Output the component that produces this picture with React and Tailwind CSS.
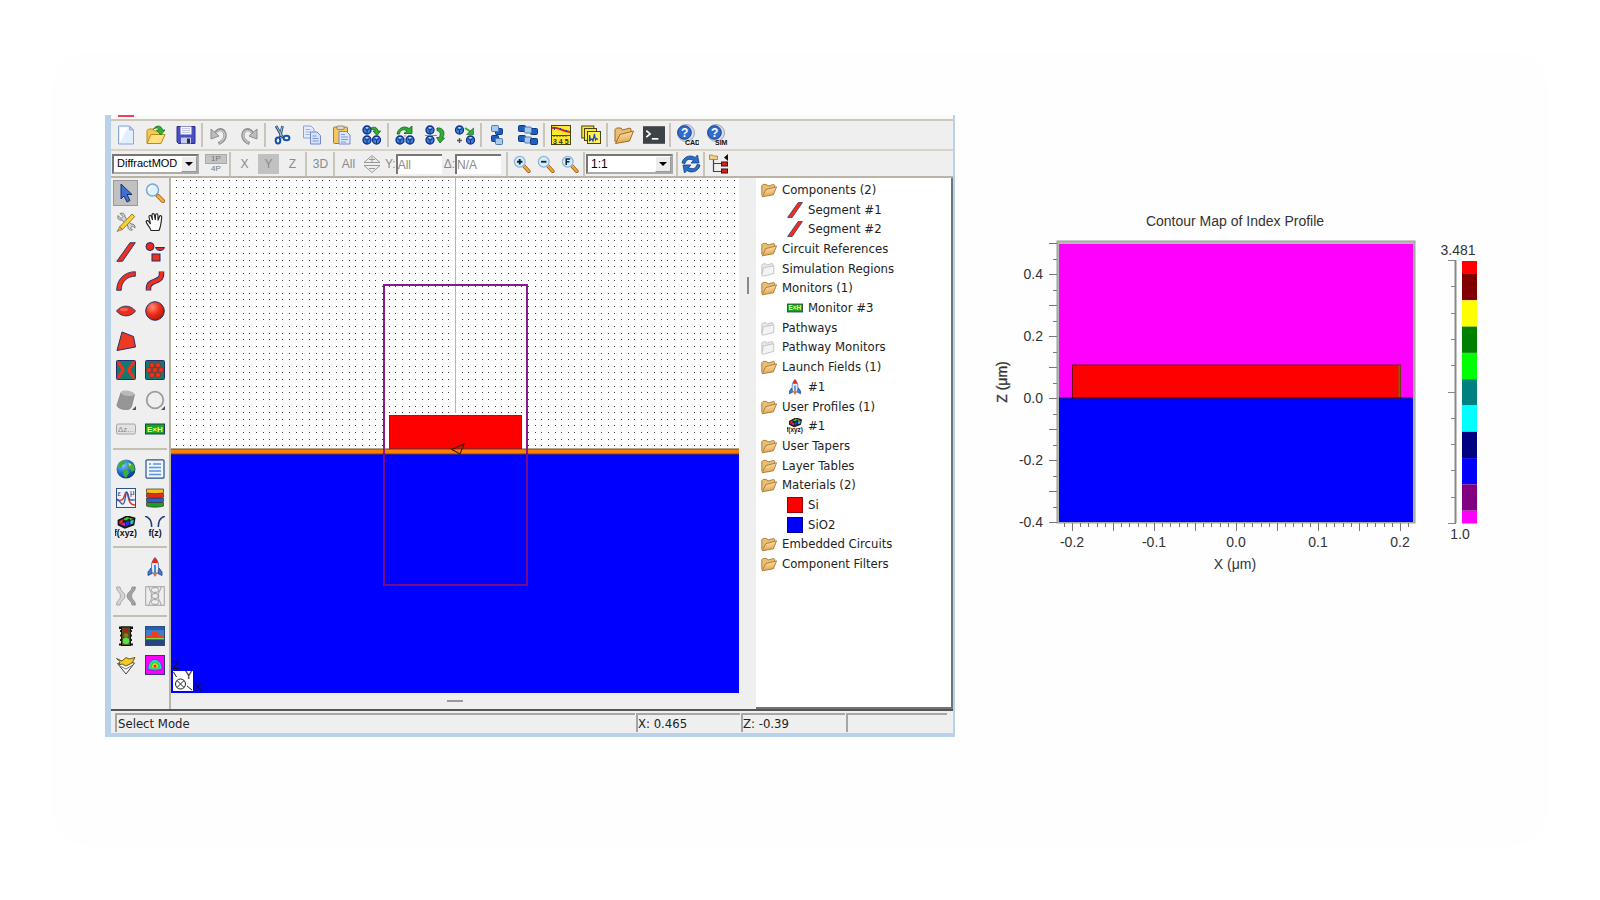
import clsx from "clsx";

const NAVY = "#1f2f6b";

function Svg({ size = 20, children }) {
  return (
    <svg width={size} height={size} viewBox="0 0 20 20" fill="none" className="shrink-0">
      {children}
    </svg>
  );
}

/* ---------- small shapes shared by several icons ---------- */

function Part({ x, y }) {
  return (
    <g>
      <circle cx={x} cy={y} r="4" fill="#3f7fd6" stroke="#0d2f86" strokeWidth="1.3" />
      <path
        d={`M${x - 2.4} ${y - 1.2}L${x} ${y}L${x + 2.4} ${y - 1.2}M${x} ${y}V${y + 3}`}
        stroke="#0d2f86"
        strokeWidth="1"
      />
      <path d={`M${x - 1.6} ${y - 2.2}L${x} ${y - 3}L${x + 1.6} ${y - 2.2}L${x} ${y - 1.2}Z`} fill="#cfe2fb" />
    </g>
  );
}

function Tile({ x, y, light }) {
  return (
    <rect
      x={x}
      y={y}
      width="7"
      height="6"
      rx="1"
      fill={light ? "#a9c9ef" : "#1d5fc0"}
      stroke={light ? "#4f79b4" : "#0c3a86"}
      strokeWidth="1"
    />
  );
}

function Lens({ sign }) {
  return (
    <Svg size={18}>
      <path d="M11.5 11.5L17.5 18" stroke="#8a4a10" strokeWidth="4" strokeLinecap="round" />
      <path d="M12 12L17.5 18" stroke="#f7a838" strokeWidth="2.6" strokeLinecap="round" />
      <circle cx="7.5" cy="7.5" r="6" fill="#d3ecfb" stroke="#8fb4d6" strokeWidth="1.4" />
      {sign === "+" && <path d="M4.5 7.5h6M7.5 4.5v6" stroke="#10203c" strokeWidth="2" />}
      {sign === "-" && <path d="M4.5 7.5h6" stroke="#10203c" strokeWidth="2" />}
      {sign === "F" && <path d="M5.8 11V4.5h4.4M5.8 7.6h3.6" stroke="#10203c" strokeWidth="1.7" />}
    </Svg>
  );
}

/* ---------- main toolbar ---------- */

const NewIcon = () => (
  <Svg>
    <path d="M2.5 1h11l4 4v14h-15z" fill="#e3eeff" stroke="#8ba6d8" />
    <path d="M4 2.500h8L4 17z" fill="#fff" />
    <path d="M13.5 1v4h4z" fill="#b6cbf0" stroke="#8ba6d8" strokeWidth=".8" />
  </Svg>
);

const OpenIcon = () => (
  <Svg>
    <path d="M1 18V5.5L2.5 4H7l1.5 2H15v4" fill="#f5c951" stroke="#b98b1c" />
    <path d="M1 18.5l4-9h14l-4 9z" fill="#ffe07a" stroke="#b98b1c" />
    <path d="M7.5 4C10 0 15.5 0 16.5 5H19l-4.2 5-4.3-5h2.7c-.6-2.5-3-2.600-5.7-1z" fill="#34b233" stroke="#187018" strokeWidth=".8" />
  </Svg>
);

const SaveIcon = () => (
  <Svg>
    <path d="M1 1.5h18v17H2.5L1 17z" fill="#4a4fc4" stroke="#2b2f8f" />
    <path d="M4.5 1.5h11v8h-11z" fill="#f4f5ff" />
    <path d="M6 3.5h8M6 5.5h8M6 7.5h8" stroke="#b8bbdf" strokeWidth=".8" />
    <path d="M5 12.5h10v6H5z" fill="#c9cce8" />
    <path d="M11 13.5h3v5h-3z" fill="#23286f" />
  </Svg>
);

const UndoIcon = ({ flip }) => (
  <Svg>
    <g transform={flip ? "translate(20 0) scale(-1 1)" : undefined}>
      <path d="M9.500 18.500c8-3.500 7.500-9.500 5-12.500-2.500-2.500-6-1.500-8.500 2.500" stroke="#8f8f8f" strokeWidth="3.200" />
      <path d="M10.5 18c6-3.500 6.300-9 3.700-11.500C12 4.700 9 5.500 6.500 8.500" stroke="#c8c8c8" strokeWidth="1.300" />
      <path d="M2 4v10l8-3z" fill="#bdbdbd" stroke="#8f8f8f" />
    </g>
  </Svg>
);

const CutIcon = () => (
  <Svg>
    <path d="M4 1l7 12M10.5 1L8 12" stroke="#29476f" strokeWidth="2.6" />
    <path d="M4.5 1.5l6 10.500M10.3 1.5L8 11" stroke="#a8c3e3" strokeWidth="1" />
    <ellipse cx="6" cy="15.5" rx="2.300" ry="2.900" stroke="#1350a8" strokeWidth="2" />
    <ellipse cx="14.5" cy="13" rx="2.900" ry="2.300" stroke="#1350a8" strokeWidth="2" />
  </Svg>
);

const CopyIcon = () => (
  <Svg>
    <path d="M1.5 1H9l3 3v9H1.5z" fill="#e3ecfd" stroke="#8f9fd6" />
    <path d="M3.5 4.5h5M3.5 7h6M3.5 9.5h6" stroke="#9fb3e4" />
    <path d="M8.5 7H15l3.5 3.5V19h-10z" fill="#d4e2fb" stroke="#7788cc" />
    <path d="M10.5 11h4M10.5 13.500h6M10.5 16h6" stroke="#7f98d8" />
  </Svg>
);

const PasteIcon = () => (
  <Svg>
    <rect x="1.5" y="2" width="14" height="16.5" rx="1" fill="#f6c65a" stroke="#b07c1a" />
    <rect x="5" y="1" width="7" height="3.5" rx="1" fill="#d9d9d9" stroke="#777" strokeWidth=".8" />
    <path d="M7 6.5h7.5L18 10v9H7z" fill="#dbe7fc" stroke="#7788cc" />
    <path d="M9 9.5h4M9 12h7M9 14.5h7M9 17h5" stroke="#7f98d8" />
  </Svg>
);

const DuplicateIcon = () => (
  <Svg>
    <Part x={5} y={5} />
    <Part x={5} y={15} />
    <Part x={14.5} y={15} />
    <path d="M9 3c4-2 6.500 0 7 3h2.500L15 10.500 11 6h2.300C13 4.500 11.500 4 9 4.800z" fill="#2fae3a" stroke="#14631b" strokeWidth=".8" />
  </Svg>
);

const RotateIcon = () => (
  <Svg>
    <Part x={5} y={15} />
    <Part x={15} y={15} />
    <path d="M10 7v12" stroke="#888" strokeDasharray="2 1" />
    <path d="M2 9C3 3 9 0 14 3.500L17 1v7.500H9L12 6C8.500 3.500 5 5 4.500 9z" fill="#2fae3a" stroke="#14631b" strokeWidth=".8" />
  </Svg>
);

const MirrorIcon = () => (
  <Svg>
    <Part x={5} y={5} />
    <Part x={5} y={15} />
    <path d="M0 10.5h12" stroke="#888" />
    <path d="M12 3c7-1 8.500 6 5.500 10h2l-4.500 5-3.500-5.500h2.500c2-3 1.500-6-2-7z" fill="#2fae3a" stroke="#14631b" strokeWidth=".8" />
  </Svg>
);

const MoveIcon = () => (
  <Svg>
    <Part x={4.5} y={5} />
    <Part x={15.5} y={15} />
    <path d="M2 15.5h5M4.5 13v5" stroke="#555" strokeWidth="1.4" />
    <path d="M10 3l6 4" stroke="#2fae3a" strokeWidth="2" />
    <path d="M18.5 3v6.500h-7z" fill="#2fae3a" stroke="#14631b" strokeWidth=".6" />
  </Svg>
);

const GroupIcon = () => (
  <Svg>
    <Tile x={7.5} y={3.5} />
    <Tile x={3.5} y={0.5} light />
    <Tile x={3.5} y={10.5} />
    <Tile x={7.5} y={13.5} light />
  </Svg>
);

const AlignIcon = () => (
  <Svg>
    <Tile x={0.5} y={0.5} />
    <Tile x={12.5} y={3.5} />
    <Tile x={6.5} y={2} light />
    <Tile x={0.5} y={10.5} />
    <Tile x={6.5} y={12} light />
    <Tile x={12.5} y={13.5} />
  </Svg>
);

const PlotIcon = () => (
  <Svg>
    <rect x=".5" y=".5" width="19" height="19" fill="#ffe92e" stroke="#4a4310" />
    <path d="M1 3c6-2 8 3 18 4" stroke="#e02020" strokeWidth="2" />
    <path d="M1 10.5h18M3 10v2M6 10v2M9 10v2M12 10v2M15 10v2" stroke="#4a4310" />
    <path d="M3 4h1M9 4h1M15 6h1" stroke="#2030c0" strokeWidth="2" />
    <text x="2" y="18.5" fontSize="7" fontWeight="700" fontFamily="Liberation Sans, sans-serif" fill="#3b3500">
      3 4 5
    </text>
  </Svg>
);

const PlotsIcon = () => (
  <Svg>
    <rect x=".8" y="1" width="12" height="12" fill="#ffe92e" stroke="#4a4310" />
    <rect x="3.5" y="3.5" width="12" height="12" fill="#ffe92e" stroke="#4a4310" />
    <rect x="6.5" y="6.5" width="13" height="12" fill="#fff25a" stroke="#4a4310" />
    <path d="M8.5 16.500V10l1 5 1.500-1 1 2 1.500-7 1 6 1-1.500 1.500 1" stroke="#1c46b8" strokeWidth="1.2" />
  </Svg>
);

function FolderIcon({ size = 20, muted }) {
  return (
    <Svg size={size}>
      <defs>
        <linearGradient id="manila" x1="0" y1="0" x2=".3" y2="1">
          <stop offset="0" stopColor="#fff0c8" />
          <stop offset="1" stopColor="#e3a54c" />
        </linearGradient>
      </defs>
      {muted ? (
        <g stroke="#b9b9b9">
          <path d="M1 17V5l1.500-1.500H6L8 5l6-2 1 2v2" fill="#e9e9e9" />
          <path d="M1 18.500l2-10L16 6v9.500L3 19z" fill="#f3f3f3" />
        </g>
      ) : (
        <g stroke="#a06a26">
          <path d="M1 17V4.500L2.500 3H7l1.500 2L16 3l1 1v4" fill="#e9bf74" />
          <path d="M1.500 18.500L6 9.500 19.500 6l-4 10z" fill="url(#manila)" />
        </g>
      )}
    </Svg>
  );
}

const ConsoleIcon = () => (
  <Svg size={22}>
    <rect x="0" y="2" width="20" height="16" fill="#3d4247" />
    <path d="M3 6l3.500 3L3 12" stroke="#fff" strokeWidth="1.5" />
    <path d="M8 13.500h6" stroke="#fff" strokeWidth="1.5" />
  </Svg>
);

const HelpIcon = ({ tag }) => (
  <svg width="24" height="22" viewBox="0 0 24 22" className="shrink-0">
    <circle cx="11" cy="9" r="8.500" fill="#d6dde8" stroke="#9aa7ba" />
    <circle cx="9.500" cy="8.500" r="6.800" fill="#2f6bd0" stroke="#1b3f91" />
    <text x="6" y="13" fontSize="12" fontWeight="700" fontFamily="Liberation Sans, sans-serif" fill="#fff">
      ?
    </text>
    <text x="10" y="21" fontSize="7" fontWeight="700" fontFamily="Liberation Sans, sans-serif" fill="#111">
      {tag}
    </text>
  </svg>
);

const RefreshIcon = () => (
  <Svg>
    <path d="M1 9C2 3 9 0 14 3.500L16.500 1l1.500 8h-8l2.500-2.500C9 4.500 5 5 4 9.500z" fill="#2b6fc4" stroke="#123f86" strokeWidth=".8" />
    <path d="M19 11c-1 6-8 9-13 5.500L3.500 19 2 11h8l-2.500 2.500C11 15.500 15 15 16 10.500z" fill="#2b6fc4" stroke="#123f86" strokeWidth=".8" />
  </Svg>
);

const TreeIcon = () => (
  <Svg>
    <path d="M4.5 5v12.500H12M4.500 9.500H12" stroke="#444" strokeWidth="1.2" />
    <path d="M.5 5.500V1h3l1 1h4v3.500z" fill="#f3d08c" stroke="#a8752c" strokeWidth=".8" />
    <path d="M19 0v7l-4-3.500z" fill="#111" />
    <rect x="12.5" y="8" width="6" height="4" fill="#d82020" stroke="#401010" />
    <rect x="12.5" y="15" width="6" height="4" fill="#d82020" stroke="#401010" />
  </Svg>
);

/* ---------- tool palette ---------- */

const ArrowIcon = () => (
  <Svg>
    <path d="M5 1l11 10.500h-5l3 6-3 1.500-3-6L5 16z" fill="#3f6fd0" stroke="#16317c" />
  </Svg>
);

const SearchIcon = () => (
  <Svg>
    <path d="M12.5 12.500L18 18" stroke="#9a5c16" strokeWidth="4" strokeLinecap="round" />
    <path d="M13 13l5 5" stroke="#f7b040" strokeWidth="2.5" strokeLinecap="round" />
    <circle cx="7.500" cy="7" r="6" fill="#dff1fc" stroke="#7fa6cf" strokeWidth="1.5" />
    <path d="M4 7c0-2.200 1.500-3.500 3.500-3.500" stroke="#fff" strokeWidth="1.5" />
  </Svg>
);

const EditIcon = () => (
  <Svg>
    <path d="M2 3.500l3 3 2-2-3-3c3-1 5 .5 5 3.500l6 7c3-.5 4.500 2 4 4l-2.500-2-2 2 2 2c-3 .5-5-1-4.500-4L6 8C3 8.500 1 6.500 2 3.500z" fill="#cfd3cf" stroke="#6e746e" strokeWidth=".9" />
    <path d="M3.500 15L16 2l2.800 2.600L6.500 17.500z" fill="#f8d338" stroke="#8f741a" strokeWidth=".9" />
    <path d="M3.500 15L1 19.500l5.500-2z" fill="#f0a090" stroke="#8f741a" strokeWidth=".7" />
  </Svg>
);

const HandIcon = () => (
  <Svg>
    <path
      d="M6 18.500c-.5-2.500-4-6-4.800-8.500-.3-1.500 1.800-2 2.600-.4L5.500 12 4 5c-.3-1.700 1.800-2.200 2.400-.5L7.500 8 7 3c0-1.800 2-1.800 2.400-.2L10.300 8l.3-5c.2-1.700 2.200-1.500 2.300.2L13 8.500l1.500-4c.6-1.500 2.400-.8 2.200.8-.4 3.500-.7 9-2.700 13.200z"
      fill="#fff"
      stroke="#222"
      strokeWidth="1.1"
    />
  </Svg>
);

const SegmentIcon = ({ size = 20 }) => (
  <Svg size={size}>
    <path d="M.8 19.300L14 .7h5.300L6.500 19.300z" fill="#f0301a" stroke={NAVY} strokeWidth=".9" />
  </Svg>
);

const ShapesIcon = () => (
  <Svg>
    <circle cx="5" cy="4.500" r="4" fill="#e62b1c" stroke={NAVY} />
    <path d="M10.500 5.500h9c-1 4-8 4-9 0z" fill="#e62b1c" stroke={NAVY} />
    <rect x="7" y="12" width="8" height="7" fill="#f0301a" stroke={NAVY} />
  </Svg>
);

const ArcIcon = () => (
  <Svg>
    <path d="M.7 19.300C.7 9 8 .7 19.300.7v4.500C11 5.200 5.200 11 5.200 19.300z" fill="#f0301a" stroke={NAVY} strokeWidth=".9" />
  </Svg>
);

const SBendIcon = () => (
  <Svg>
    <path d="M3.500 19.500V17c0-9 13-4.500 13-14V.5" stroke={NAVY} strokeWidth="5.500" />
    <path d="M3.500 19V17c0-9 13-4.500 13-14V1" stroke="#f0301a" strokeWidth="3.800" />
  </Svg>
);

const LensIcon = () => (
  <Svg>
    <path d="M.5 10c5-6.500 14-6.500 19 0-5 6.500-14 6.500-19 0z" fill="#e8301c" stroke={NAVY} strokeWidth=".9" />
    <ellipse cx="8" cy="8.500" rx="4" ry="1.800" fill="#f9604a" />
  </Svg>
);

const SphereIcon = () => (
  <Svg>
    <defs>
      <radialGradient id="ball" cx=".35" cy=".3" r=".8">
        <stop offset="0" stopColor="#ff8d78" />
        <stop offset=".5" stopColor="#ee2d18" />
        <stop offset="1" stopColor="#a81208" />
      </radialGradient>
    </defs>
    <circle cx="10" cy="10" r="9.300" fill="url(#ball)" stroke={NAVY} />
  </Svg>
);

const PolygonIcon = () => (
  <Svg>
    <path d="M6 1l11.500 4.500L19.500 16 1 19.500z" fill="#ee3a22" stroke={NAVY} />
  </Svg>
);

const CouplerIcon = () => (
  <Svg>
    <rect x=".5" y=".5" width="19" height="19" rx="1" fill="#0e7a74" stroke={NAVY} />
    <path d="M2.500 1.500c0 4.500 4.500 5 4.500 8.500s-4.500 4-4.500 8.500M17.500 1.500c0 4.500-4.500 5-4.500 8.500s4.500 4 4.500 8.500" stroke="#f0301a" strokeWidth="3.400" />
  </Svg>
);

const CrystalIcon = () => (
  <Svg>
    <rect x=".5" y=".5" width="19" height="19" rx="1" fill="#0e7a74" stroke={NAVY} />
    {[[7, 5], [13, 5], [4, 10], [10, 10], [16, 10], [7, 15], [13, 15]].map(([x, y]) => (
      <circle key={`${x}-${y}`} cx={x} cy={y} r="2.600" fill="#f0301a" stroke="#802018" strokeWidth=".5" />
    ))}
  </Svg>
);

const CylinderIcon = () => (
  <Svg>
    <path d="M5 2.500c3 1.500 9 3 13.500 2l-3 12c-1 3-4 3.500-7 3-4-.5-7.500-2-7.500-4.500z" fill="#969696" stroke="#7d7d7d" strokeWidth=".7" />
    <ellipse cx="11.700" cy="3.300" rx="6.900" ry="2.600" transform="rotate(8 11.700 3.300)" fill="#b9b9b9" />
    <path d="M20 16v4h-4z" fill="#555" />
  </Svg>
);

const RingIcon = () => (
  <Svg>
    <circle cx="10" cy="10" r="8.300" stroke="#9c9c9c" strokeWidth="1.800" />
    <path d="M20 16v4h-4z" fill="#555" />
  </Svg>
);

const DeltaIcon = () => (
  <Svg>
    <rect x=".5" y="5" width="19" height="10" rx="1.500" fill="#e2e2e2" stroke="#a4a4a4" />
    <text x="2" y="13" fontSize="8" fontFamily="Liberation Sans, sans-serif" fill="#8a8a8a">
      Δz...
    </text>
  </Svg>
);

const MonitorIcon = ({ size = 20 }) => (
  <Svg size={size}>
    <rect x=".5" y="5" width="19" height="10" fill="#19a51c" stroke="#1c3c60" />
    <text x="2" y="13" fontSize="8" fontWeight="700" fontFamily="Liberation Sans, sans-serif" fill="#f4ff7a">
      E×H
    </text>
  </Svg>
);

const GlobeIcon = () => (
  <Svg>
    <defs>
      <radialGradient id="sea" cx=".35" cy=".3" r=".8">
        <stop offset="0" stopColor="#7cc8f7" />
        <stop offset=".6" stopColor="#1763c4" />
        <stop offset="1" stopColor="#082a70" />
      </radialGradient>
    </defs>
    <circle cx="10" cy="10" r="9.500" fill="url(#sea)" />
    <path d="M3 4c3-3 5-3 7-2l-1 3-3 1v3L2 8zM8 10l4 1 1 3-3 5-3-3zM13 3l5 3 1 5-3 2-2-3-2-2z" fill="#3fae3b" />
    <path d="M12 4l3 1-1 3z" fill="#e8d85a" />
  </Svg>
);

const SheetIcon = () => (
  <Svg>
    <rect x="1" y=".8" width="18" height="18.400" rx="1" fill="#edf5ff" stroke="#2c4f95" strokeWidth="1.2" />
    <path d="M4 5h2M8 5h8M4 8.500h12M4 12h12M4 15.500h12" stroke="#5e92dc" strokeWidth="1.3" />
  </Svg>
);

const DispersionIcon = () => (
  <Svg>
    <rect x=".5" y=".5" width="19" height="19" fill="#eef3fc" stroke="#34508c" />
    <path d="M1 12.500c5 0 6 0 7.500-5S11 3 12 8s2 9 7 9" stroke="#e0391f" strokeWidth="1.5" />
    <path d="M1 11c3 1 4 6 6 5s2-6 3-10 2 0 3 4 3 1 6 2" stroke="#2a5ab8" strokeWidth="1.3" />
    <text x="1.500" y="7.500" fontSize="8" fontFamily="Liberation Sans, sans-serif" fill="#24376e">ε</text>
    <text x="14" y="7" fontSize="8" fontFamily="Liberation Sans, sans-serif" fill="#24376e">μ</text>
  </Svg>
);

const LayersIcon = () => (
  <Svg>
    {[["#19a02a", 14.5], ["#2b62d8", 10], ["#e3291c", 5.5], ["#f3c21b", 1]].map(([fill, y]) => (
      <path key={fill} d={`M1.500 ${y}h17v3.500c-2 1.500-15 1.500-17 0z`} fill={fill} stroke="#3a3020" strokeWidth=".7" />
    ))}
  </Svg>
);

const ProfileIcon = ({ size = 22 }) => (
  <Svg size={size}>
    <path d="M3 4l8-4 7 2-1 6-8 3-6-3z" fill="#222" stroke="#111" strokeWidth="1.2" />
    <path d="M4 4.500L7 3v3.500L4 7.500z" fill="#e22" />
    <path d="M7.500 3l3.500-2 2.500.8L10 4z" fill="#2d2" />
    <path d="M13 2l3.500.5-2.500 1z" fill="#dd2" />
    <path d="M10 5.500l3-1.200v3.500L10 9z" fill="#23e" />
    <path d="M14 4.300l3-1-.5 3.500-2.500 1z" fill="#2cd" />
    <path d="M5 7.500l4 1.700V6z" fill="#d2d" />
    <text x="-1" y="18" fontSize="8" fontWeight="700" fontFamily="Liberation Sans, sans-serif" fill="#111">
      f(xyz)
    </text>
  </Svg>
);

const TaperIcon = () => (
  <Svg size={22}>
    <path d="M1 0c5 2 6 5 6 10M19 0c-5 2-6 5-6 10" stroke="#273b78" strokeWidth="1.4" />
    <text x="4" y="18" fontSize="8" fontWeight="700" fontFamily="Liberation Sans, sans-serif" fill="#111">
      f(z)
    </text>
  </Svg>
);

const RocketIcon = ({ size = 20 }) => (
  <Svg size={size}>
    <path d="M6 11l-3 4v3.500l4-2zM14 11l3 4v3.500l-4-2z" fill="#3f7fd8" stroke="#1a3b86" strokeWidth=".8" />
    <path d="M10 .5c3 3 4 7 3.500 11L13 16H7l-.5-4.500C6 7.500 7 3.500 10 .5z" fill="#e3edf8" stroke="#445a86" strokeWidth=".8" />
    <path d="M10 .5c1.800 1.800 2.600 3.500 3 5.500H7c.4-2 1.200-3.700 3-5.500z" fill="#e02a1c" />
    <path d="M9 8h2v8H9z" fill="#4c8ae0" />
    <path d="M7.500 16h5L10 20z" fill="#f26a1c" />
  </Svg>
);

const ModesIcon = () => (
  <Svg>
    <path d="M.5 1H4c0 4.500 5 5 5 9s-5 4.500-5 9H.5c0-4.500 4-5 4-9s-4-4.500-4-9z" fill="#d4d4d4" stroke="#9a9a9a" strokeWidth=".8" />
    <path d="M19.500 1H16c0 4.500-5 5-5 9s5 4.500 5 9h3.500c0-4.500-4-5-4-9s4-4.500 4-9z" fill="#a2a2a2" stroke="#8a8a8a" strokeWidth=".8" />
  </Svg>
);

const CavityIcon = () => (
  <Svg>
    <rect x=".7" y=".7" width="18.600" height="18.600" fill="#eee" stroke="#a2a2a2" />
    <path d="M4 1c0 4 3 5 3 9s-3 5-3 9M16 1c0 4-3 5-3 9s3 5 3 9" stroke="#a2a2a2" />
    <ellipse cx="10" cy="4" rx="4" ry="2.500" stroke="#a2a2a2" />
    <ellipse cx="10" cy="10" rx="4" ry="2.500" stroke="#a2a2a2" />
    <ellipse cx="10" cy="16" rx="4" ry="2.500" stroke="#a2a2a2" />
  </Svg>
);

const LightIcon = () => (
  <Svg>
    <path d="M3 .5h14v2.500H3zM3 17.500h14v2H3z" fill="#111" />
    <path d="M4 5h12M4 9.500h12M4 14h12" stroke="#222" strokeWidth="2" />
    <rect x="5.500" y="1" width="9" height="18.500" fill="#53501c" stroke="#111" />
    <circle cx="10" cy="4.500" r="2.300" fill="#a42018" />
    <circle cx="10" cy="9.500" r="2.300" fill="#8a7a20" />
    <circle cx="10" cy="15" r="3.300" fill="#58e048" />
  </Svg>
);

const IndexIcon = () => (
  <Svg>
    <rect x=".5" y=".5" width="19" height="19" fill="#3f7ccb" stroke="#2b4a7d" />
    <path d="M1 1h18v3H1z" fill="#2360b0" />
    <path d="M1 10h5l1-4h6l1 4h5v2.500H1z" fill="#f03c20" />
    <path d="M1 12h18v1.500H1z" fill="#7ddc4a" />
    <path d="M1 13.500h18V19H1z" fill="#24457f" />
  </Svg>
);

const CubeIcon = () => (
  <Svg>
    <path d="M1.500 8.500l8.500-2 8.500 1.500L10 19z" fill="#fafafa" stroke="#444" />
    <path d="M4 11l6 3 6-3.500" stroke="#777" />
    <path d="M.5 3.500L6 6l4-3.500L13 4l6-1.500-3 5.500-6 3-4-2-3 1L4 6.500z" fill="#f4c92c" stroke="#5b4a12" strokeWidth=".9" />
  </Svg>
);

const ContourIcon = () => (
  <Svg>
    <rect x=".5" y=".5" width="19" height="19" fill="#ff00ff" stroke="#3b2f80" />
    <path d="M3 14c0-5 3-9.500 7-9.500s7 4.500 7 9.500c-3 1.500-11 1.500-14 0z" fill="#3fd0e0" stroke="#2038a0" strokeWidth=".6" />
    <path d="M5 13c0-4 2-6.500 5-6.500s5 2.500 5 6.500c-2 1-8 1-10 0z" fill="#34d834" />
    <path d="M7 12.500C7 10 8.500 8.300 10 8.300s3 1.700 3 4.200z" fill="#f6e020" />
    <circle cx="10" cy="11" r="1.500" fill="#e22" />
  </Svg>
);

/* ---------- bars ---------- */

const toolGroups = [
  [["New", <NewIcon />], ["Open", <OpenIcon />], ["Save", <SaveIcon />]],
  [["Undo", <UndoIcon />], ["Redo", <UndoIcon flip />]],
  [["Cut", <CutIcon />], ["Copy", <CopyIcon />], ["Paste", <PasteIcon />], ["Duplicate", <DuplicateIcon />]],
  [["Rotate", <RotateIcon />], ["Mirror", <MirrorIcon />], ["Move", <MoveIcon />]],
  [["Group", <GroupIcon />], ["Align", <AlignIcon />]],
  [["View plot", <PlotIcon />], ["View plots", <PlotsIcon />]],
  [["Browse", <FolderIcon />], ["Console", <ConsoleIcon />]],
  [["CAD help", <HelpIcon tag="CAD" />], ["Simulation help", <HelpIcon tag="SIM" />]],
];

const paletteGroups = [
  [
    ["Select", <ArrowIcon />], ["Zoom", <SearchIcon />],
    ["Edit", <EditIcon />], ["Pan", <HandIcon />],
    ["Segment", <SegmentIcon />], ["Shapes", <ShapesIcon />],
    ["Arc", <ArcIcon />], ["S-bend", <SBendIcon />],
    ["Lens", <LensIcon />], ["Sphere", <SphereIcon />],
    ["Polygon", <PolygonIcon />], null,
    ["Coupler", <CouplerIcon />], ["Crystal", <CrystalIcon />],
    ["Cylinder", <CylinderIcon />], ["Ring", <RingIcon />],
    ["Delta", <DeltaIcon />], ["Monitor", <MonitorIcon />],
  ],
  [
    ["Global settings", <GlobeIcon />], ["Symbols", <SheetIcon />],
    ["Materials", <DispersionIcon />], ["Layers", <LayersIcon />],
    ["Profiles", <ProfileIcon />], ["Tapers", <TaperIcon />],
  ],
  [
    null, ["Launch", <RocketIcon />],
    ["Modes", <ModesIcon />], ["Cavity", <CavityIcon />],
  ],
  [
    ["Simulate", <LightIcon />], ["Index profile", <IndexIcon />],
    ["Structure", <CubeIcon />], ["Contour map", <ContourIcon />],
  ],
];

const paletteHeights = ["h-[266px]", "h-[88px]", "h-[59px]", "h-[59px]"];

function Separator() {
  return <span className="h-6 w-[3px] shrink-0 border-l-2 border-[#c9c5b8]" />;
}

function Toolbar() {
  return (
    <div className="flex h-8 items-center border-t-2 border-b-2 border-[#cbc7ba] border-b-[#d6d3c9]">
      {toolGroups.map((group, i) => (
        <div key={group[0][0]} className="flex items-center">
          {i > 0 && <Separator />}
          {group.map(([label, icon]) => (
            <button key={label} type="button" aria-label={label} className="flex h-7 w-[30px] items-center justify-center">
              {icon}
            </button>
          ))}
        </div>
      ))}
    </div>
  );
}

function AxisButton({ children, active }) {
  return (
    <button
      type="button"
      className={clsx("flex h-5 w-[21px] items-center justify-center text-[#8a8a8a]", active && "bg-[#c1c1c1]")}
    >
      {children}
    </button>
  );
}

function Combo({ label, value, className }) {
  return (
    <div className={clsx("relative h-5 border-2 border-[#777] border-r-[#aaa] border-b-[#aaa] bg-white", className)}>
      <select aria-label={label} className="block h-full w-full appearance-none bg-transparent pl-[3px] text-black">
        <option>{value}</option>
      </select>
      <span className="pointer-events-none absolute top-0 right-0 flex h-4 w-4 items-center justify-center border border-[#999] border-t-white border-l-white bg-[#ececec]">
        <svg width="8" height="4" viewBox="0 0 8 4">
          <path d="M0 0h8L4 4z" fill="#000" />
        </svg>
      </span>
    </div>
  );
}

function Field({ label, value }) {
  return (
    <label className="flex items-center text-[#8a8a8a]">
      {label}
      <input
        defaultValue={value}
        className="h-5 w-[46px] border-t-2 border-l-2 border-[#777] bg-white text-[#8a8a8a] outline-none"
      />
    </label>
  );
}

function ViewBar() {
  return (
    <div className="flex h-[27px] items-center border-b-2 border-[#b9b4a4] font-['Liberation_Sans',Arial,sans-serif] text-xs">
      <Combo label="Simulator" value="DiffractMOD" className="ml-px w-[87px] text-[11px]" />
      <div className="mr-[2px] ml-[6px] flex w-[22px] flex-col text-center text-[8px] leading-[10px] text-[#777]">
        <button type="button" className="border border-[#aaa] bg-[#c4c4c4] leading-[8px]">1P</button>
        <button type="button">4P</button>
      </div>
      <Separator />
      <div className="flex gap-[3px] px-[2px]">
        <AxisButton>X</AxisButton>
        <AxisButton active>Y</AxisButton>
        <AxisButton>Z</AxisButton>
      </div>
      <Separator />
      <div className="px-[2px]">
        <AxisButton>3D</AxisButton>
      </div>
      <Separator />
      <div className="flex items-center gap-[2px] px-[2px]">
        <AxisButton>All</AxisButton>
        <button type="button" aria-label="Step" className="flex h-5 w-[22px] items-center justify-center">
          <svg width="18" height="20" viewBox="0 0 18 20" fill="none" stroke="#999">
            <path d="M1 8.500L9 1.500l8 7zM1 11.500l8 7 8-7z" />
            <path d="M6 5.500h6M9 3v5M6 14.500h6" />
          </svg>
        </button>
        <Field label="Y:" value="All" />
        <Field label="Δ:" value="N/A" />
      </div>
      <span className="w-[3px]" />
      <Separator />
      <div className="flex px-px">
        {["+", "-", "F"].map((sign) => (
          <button key={sign} type="button" aria-label={`Zoom ${sign}`} className="flex h-5 w-6 items-center justify-center">
            <Lens sign={sign} />
          </button>
        ))}
      </div>
      <Separator />
      <Combo label="Aspect ratio" value="1:1" className="w-[87px]" />
      <span className="w-[3px]" />
      <Separator />
      <button type="button" aria-label="Refresh" className="flex w-6 justify-center">
        <RefreshIcon />
      </button>
      <Separator />
      <button type="button" aria-label="Toggle tree" className="flex w-[26px] justify-center">
        <TreeIcon />
      </button>
    </div>
  );
}

function Palette() {
  return (
    <div className="flex w-[60px] shrink-0 flex-col border-r-2 border-[#b9b4a4]">
      {paletteGroups.map((group, g) => (
        <div key={g}>
          {g > 0 && <hr className="mx-[2px] my-1 border-t-2 border-[#c4c0b2]" />}
          <div className={clsx("grid auto-rows-fr grid-cols-2", paletteHeights[g])}>
            {group.map((tool, i) =>
              tool ? (
                <button
                  key={tool[0]}
                  type="button"
                  aria-label={tool[0]}
                  className={clsx(
                    "m-[2px] flex items-center justify-center",
                    tool[0] === "Select" && "border border-[#999] bg-[#c1c1c1]"
                  )}
                >
                  {tool[1]}
                </button>
              ) : (
                <span key={i} />
              )
            )}
          </div>
        </div>
      ))}
    </div>
  );
}

/* ---------- drawing area ---------- */

// grid points are spaced 6.635 apart around the vertical axis
const STEP = 6.635;
let gridPath = "";
for (let j = 0; j < 41; j++) {
  for (let i = -42; i < 43; i++) {
    const x = Math.round(284 + i * STEP);
    const y = Math.round(3 + j * STEP);
    gridPath += `M${x} ${y}h1v1h-1z`;
  }
}

function Drawing() {
  return (
    <svg viewBox="0 1 568 515" className="block h-auto w-full bg-white">
      <path d={gridPath} fill="#3a3a3a" />
      <path d="M284.5 0v238" stroke="#b4b4b4" />
      <rect x="216" y="236" width="138" height="36" fill="#fff" />
      <rect x="0" y="277" width="568" height="239" fill="#0000ff" />
      <rect x="0" y="272" width="568" height="5" fill="#ff8000" />
      <path d="M0 272h568" stroke="#6b4a20" />
      <path d="M0 277h568" stroke="#6b4a20" />
      <rect x="218.5" y="238.5" width="132" height="33" fill="#ff0000" stroke="#9c1a1a" />
      <path d="M213 276V108h143v168" fill="none" stroke="#8a1a8a" strokeWidth="2" />
      <path d="M213 276v132h143V276" fill="none" stroke="#7a0a88" strokeWidth="2" />
      <path d="M281 272.5L293 267l-4 10z" fill="none" stroke="#402000" strokeWidth="1.2" />
      <rect x="2" y="494" width="20" height="20" fill="#fff" />
      <g stroke="#222" fill="none">
        <circle cx="9.500" cy="507" r="5" />
        <path d="M6 503.500l7 7M13 503.500l-7 7M2.500 495l3 5M16 509l5 4" />
      </g>
      <g fontFamily="Liberation Sans, sans-serif" fontSize="11" fill="#111">
        <text x="2" y="492">Z</text>
        <text x="14" y="502">Y</text>
        <text x="24" y="514">X</text>
      </g>
    </svg>
  );
}

/* ---------- object tree ---------- */

const Swatch = ({ className }) => <span className={clsx("h-4 w-4 border border-black/40", className)} />;

const treeRows = [
  { text: "Components (2)" },
  { text: "Segment #1", icon: <SegmentIcon size={16} /> },
  { text: "Segment #2", icon: <SegmentIcon size={16} /> },
  { text: "Circuit References" },
  { text: "Simulation Regions", muted: true },
  { text: "Monitors (1)" },
  { text: "Monitor #3", icon: <MonitorIcon size={16} /> },
  { text: "Pathways", muted: true },
  { text: "Pathway Monitors", muted: true },
  { text: "Launch Fields (1)" },
  { text: "#1", icon: <RocketIcon size={16} /> },
  { text: "User Profiles (1)" },
  { text: "#1", icon: <ProfileIcon size={16} /> },
  { text: "User Tapers" },
  { text: "Layer Tables" },
  { text: "Materials (2)" },
  { text: "Si", icon: <Swatch className="bg-[#ff0000]" /> },
  { text: "SiO2", icon: <Swatch className="bg-[#0000ff]" /> },
  { text: "Embedded Circuits" },
  { text: "Component Filters" },
];

function ObjectTree() {
  return (
    <div className="w-[197px] shrink-0 border-r-2 border-b-2 border-[#6f7479] bg-white">
      <ul className="mt-[2px] grid h-[394px] auto-rows-fr">
        {treeRows.map((row, i) => (
          <li key={i} className={clsx("flex items-center gap-[5px] leading-4", row.icon ? "pl-[31px]" : "pl-[5px]")}>
            {row.icon || <FolderIcon size={16} muted={row.muted} />}
            <span>{row.text}</span>
          </li>
        ))}
      </ul>
    </div>
  );
}

function StatusBar() {
  const cell = "h-[19px] border-t-2 border-l-2 border-[#a6a6a6] leading-[17px]";
  return (
    <div className="flex items-center gap-px border-t-2 border-[#555] pt-[2px] pr-[6px] pb-px pl-[4px]">
      <div className={clsx(cell, "flex-1 pl-px")}>Select Mode</div>
      <div className={clsx(cell, "w-[104px]")}>X: 0.465</div>
      <div className={clsx(cell, "w-[104px]")}>Z: -0.39</div>
      <div className={clsx(cell, "w-[101px]")} />
    </div>
  );
}

function CadWindow() {
  return (
    <section className="border-r-2 border-b-4 border-l-[6px] border-[#b9d1ea] bg-[#efefef] font-['DejaVu_Sans_Condensed','DejaVu_Sans',Tahoma,sans-serif] text-[13px] text-[#222]">
      <div className="flex h-1 items-start bg-[#fafafa] pl-[7px]">
        <span className="h-[2px] w-4 bg-[#f0405a]" />
      </div>
      <Toolbar />
      <ViewBar />
      <div className="flex">
        <Palette />
        <div className="min-w-0 flex-1">
          <Drawing />
          <div className="flex h-4 items-center justify-center">
            <span className="h-[2px] w-4 bg-[#999]" />
          </div>
        </div>
        <div className="flex w-[17px] shrink-0 justify-center pt-[99px]">
          <span className="h-[17px] w-[2px] bg-[#888]" />
        </div>
        <ObjectTree />
      </div>
      <StatusBar />
    </section>
  );
}

/* ---------- contour map ---------- */

const px = (v) => 261 + v * 820;
const pz = (v) => 193 - v * 310;

const legendColors = [
  "#ff0000", "#800000", "#ffff00", "#008000", "#00ff00", "#008080",
  "#00ffff", "#000080", "#0000ff", "#800080", "#ff00ff",
];

function ContourMap() {
  const xTicks = Array.from({ length: 43 }, (_, i) => i - 21);
  const zTicks = Array.from({ length: 19 }, (_, i) => i - 8);

  return (
    <svg viewBox="0 0 520 372" className="mt-[90px] h-auto w-full" fontFamily="Liberation Sans, Arial, sans-serif" fontSize="14" fill="#333">
      <text x="260" y="21" textAnchor="middle">
        Contour Map of Index Profile
      </text>

      <rect x="82" y="36" width="358" height="282" fill="#b4b8b0" stroke="#999c96" />
      <rect x="84" y="39" width="354" height="154" fill="#ff00ff" />
      <rect x="84" y="193" width="354" height="124" fill="#0000ff" />
      <rect x="97.5" y="160" width="328" height="33" fill="#ff0000" stroke="#701010" />
      <path d="M424.5 160v33" stroke="#6b6a10" strokeWidth="2" />
      <path d="M84 193h354" stroke="#200060" />

      <g stroke="#777">
        {zTicks.map((t) => (
          <path key={t} d={`M${t % 2 ? 78 : 74} ${Math.round(pz(t / 20)) + 0.5}H82`} />
        ))}
        {xTicks.map((t) => (
          <path key={t} d={`M${Math.round(px(t / 100)) + 0.5} 318V${t % 5 ? 322 : 326}`} />
        ))}
      </g>

      {["0.4", "0.2", "0.0", "-0.2", "-0.4"].map((t) => (
        <text key={t} x="68" y={pz(Number(t)) + 5} textAnchor="end">
          {t}
        </text>
      ))}
      {["-0.2", "-0.1", "0.0", "0.1", "0.2"].map((t) => (
        <text key={t} x={px(Number(t))} y="342" textAnchor="middle">
          {t}
        </text>
      ))}
      <text x="260" y="364" textAnchor="middle">
        X (μm)
      </text>
      <text transform="translate(32 177) rotate(-90)" textAnchor="middle" stroke="#333" strokeWidth=".3">
        Z (μm)
      </text>

      <text x="483" y="50" textAnchor="middle">
        3.481
      </text>
      <text x="485" y="334" textAnchor="middle">
        1.0
      </text>
      <g stroke="#888">
        <path d="M480.5 55v263" strokeWidth="2" />
        {Array.from({ length: 11 }, (_, i) => (
          <path key={i} d={`M${i % 5 ? 476 : 473} ${Math.round(55 + i * 26.3) + 0.5}H481`} />
        ))}
      </g>
      {legendColors.map((color, i) => {
        const top = i === 0 ? 56 : 69 + (i - 1) * 26.3;
        const bottom = i === 10 ? 318.5 : 69 + i * 26.3;
        return <rect key={color} x="487" y={top} width="15" height={bottom - top} fill={color} />;
      })}
    </svg>
  );
}

export default function App() {
  return (
    <main className="min-h-screen bg-white px-[51px] py-[52px]">
      <div className="grid min-h-[calc(100vh-106px)] grid-cols-[85fr_52fr] items-start gap-5 rounded-[40px] bg-[#fefefe] px-[54px] pt-[63px] pb-10">
        <CadWindow />
        <ContourMap />
      </div>
    </main>
  );
}
